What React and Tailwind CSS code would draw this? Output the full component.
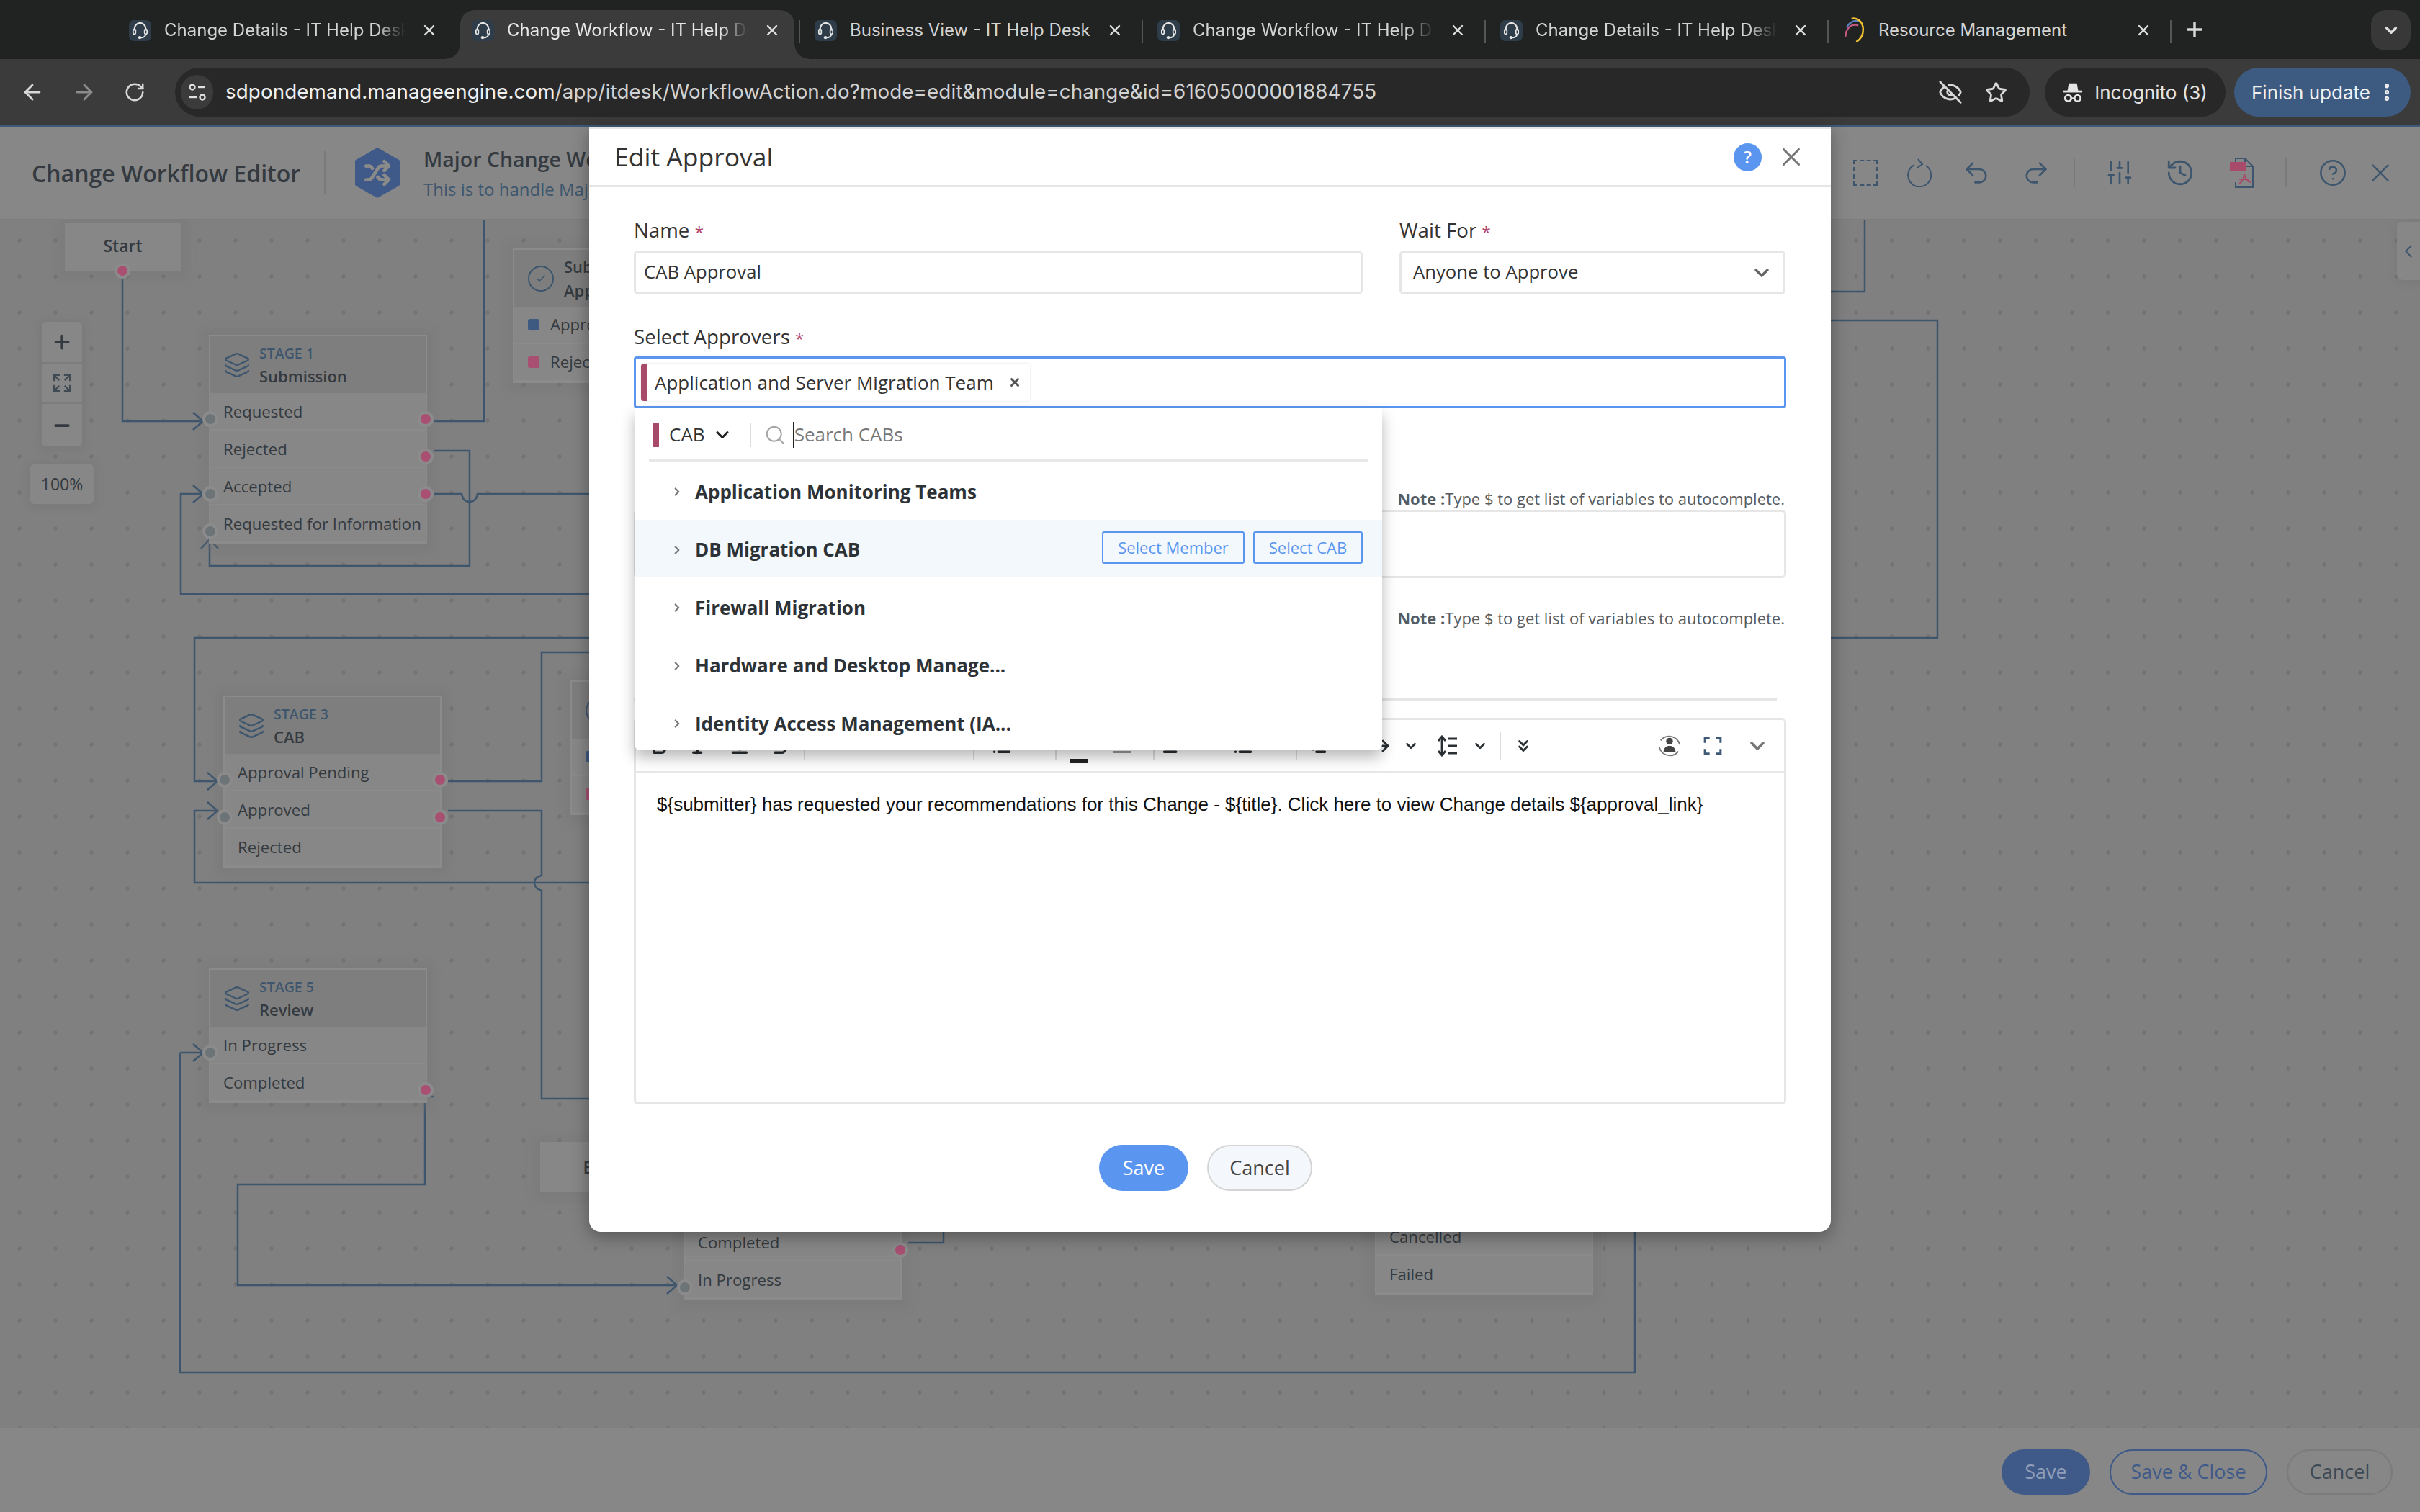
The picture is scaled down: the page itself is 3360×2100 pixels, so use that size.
import React from 'react';
import {
  ArrowLeft, ArrowRight, RotateCw, EyeOff, Star, Plus, X, ChevronDown, ChevronRight, ChevronLeft,
  ChevronsDown, MoreVertical, Search, Undo2, Redo2, SlidersVertical, History, CircleHelp, Layers,
  Check, Shuffle, Minus, Bold, Italic, Underline, Strikethrough, AlignLeft, List, Outdent,
} from 'lucide-react';

const tabs = [
  { title: 'Change Details - IT Help Desk', fade: true },
  { title: 'Change Workflow - IT Help Desk', fade: true, active: true },
  { title: 'Business View - IT Help Desk', sep: true },
  { title: 'Change Workflow - IT Help Desk', fade: true, sep: true },
  { title: 'Change Details - IT Help Desk', fade: true, sep: true },
  { title: 'Resource Management', sep: true, rainbow: true },
];

const HeadsetIcon = () => (
  <svg viewBox="0 0 32 30" className="w-[31px] h-[29px] shrink-0">
    <rect width="32" height="30" rx="7" fill="#2f3d4a" />
    <path d="M8 15v-3a8 8 0 0 1 16 0v3" fill="none" stroke="#e6e6e6" strokeWidth="2.2" />
    <rect x="6" y="13" width="3.6" height="7" rx="1.8" fill="none" stroke="#e6e6e6" strokeWidth="1.8" />
    <rect x="22.4" y="13" width="3.6" height="7" rx="1.8" fill="none" stroke="#e6e6e6" strokeWidth="1.8" />
    <path d="M24 20c0 3-3 5-7 5" fill="none" stroke="#e6e6e6" strokeWidth="2" />
    <circle cx="15.5" cy="25" r="2.2" fill="#e6e6e6" />
  </svg>
);

const RainbowIcon = () => (
  <svg viewBox="0 0 32 40" className="w-[31px] h-[38px] shrink-0" fill="none" strokeWidth="2.6">
    <path d="M3 30C4 16 12 10 22 13" stroke="#c2577f" />
    <path d="M5 16C9 8 17 4 25 8" stroke="#5b7fb8" />
    <path d="M12 3c8-2 17 4 17 16 0 9-5 15-10 18" stroke="#f2c230" />
  </svg>
);

const Tab = ({ tab }) => (
  <div className={`relative flex items-center h-[68px] w-[464px] mr-[12px] pl-[16px] pb-[12px] rounded-t-[20px] ${tab.active ? 'bg-[#3b3b3b]' : ''}`}>
    {tab.active && (
      <>
        <span className="absolute -left-[20px] bottom-0 w-[20px] h-[20px] bg-[radial-gradient(circle_at_0_0,transparent_19px,#3b3b3b_20px)]" />
        <span className="absolute -right-[20px] bottom-0 w-[20px] h-[20px] bg-[radial-gradient(circle_at_100%_0,transparent_19px,#3b3b3b_20px)]" />
      </>
    )}
    {tab.rainbow ? <RainbowIcon /> : <HeadsetIcon />}
    <span className={`ml-[18px] w-[335px] whitespace-nowrap overflow-hidden text-[24px] ${tab.active ? 'text-[#e8e8e8]' : 'text-[#d4d4d4]'} ${tab.fade ? '[mask-image:linear-gradient(to_right,black_88%,transparent)]' : ''}`}>
      {tab.title}
    </span>
    <X className="ml-[21px] w-[24px] h-[24px] text-[#dddddd]" strokeWidth={2.4} />
    {tab.sep && <span className="absolute -left-[6px] top-[14px] w-[2px] h-[32px] bg-[#555555]" />}
  </div>
);

const IncognitoIcon = () => (
  <svg viewBox="0 0 30 32" className="w-[28px] h-[30px]" fill="none" stroke="#e5e5e5">
    <path d="M7 14l2-11h12l2 11z" fill="#e5e5e5" stroke="none" />
    <path d="M1 15h28" strokeWidth="3" />
    <circle cx="8" cy="25" r="4.5" strokeWidth="3" />
    <circle cx="22" cy="25" r="4.5" strokeWidth="3" />
    <path d="M12.5 25h5" strokeWidth="2.4" />
  </svg>
);

const BrowserChrome = () => (
  <div className="font-['Inter',sans-serif]">
    <div className="relative flex items-end h-[82px] pl-[163px] bg-[#202322]">
      {tabs.map((tab, i) => <Tab key={i} tab={tab} />)}
      <span className="absolute left-[3013px] top-[28px] w-[2px] h-[32px] bg-[#555555]" />
      <Plus className="absolute left-[3031px] top-[25px] w-[32px] h-[32px] text-[#d8d8d8]" strokeWidth={2.6} />
      <div className="absolute left-[3292px] top-[14px] w-[55px] h-[56px] rounded-[20px] bg-[#383838] flex items-center justify-center">
        <ChevronDown className="w-[26px] h-[26px] text-[#e0e0e0]" strokeWidth={3} />
      </div>
    </div>
    <div className="flex items-center h-[94px] bg-[#3b3b3b] border-b-2 border-[#3e5a78]">
      <ArrowLeft className="ml-[28px] w-[34px] h-[34px] text-[#d8d8d8]" strokeWidth={2} />
      <ArrowRight className="ml-[38px] w-[34px] h-[34px] text-[#8c8c8c]" strokeWidth={2} />
      <RotateCw className="ml-[38px] w-[30px] h-[30px] text-[#d8d8d8]" strokeWidth={2} />
      <div className="ml-[41px] flex items-center w-[2575px] h-[68px] rounded-full bg-[#282828]">
        <div className="ml-[8px] w-[45px] h-[48px] rounded-full bg-[#3b3b3b] flex items-center justify-center">
          <svg viewBox="0 0 26 28" className="w-[26px] h-[28px]" fill="none" stroke="#e0e0e0" strokeWidth="2.4">
            <circle cx="6" cy="7" r="3.5" />
            <path d="M14 7h10" />
            <path d="M2 21h10" />
            <circle cx="20" cy="21" r="3.5" />
          </svg>
        </div>
        <span className="ml-[17px] text-[27.75px] tracking-[0.1px] text-[#d2d2d2] whitespace-nowrap">
          <span className="text-[#f0f0f0]">sdpondemand.manageengine.com</span>/app/itdesk/WorkflowAction.do?mode=edit&amp;module=change&amp;id=61605000001884755
        </span>
        <EyeOff className="ml-auto w-[34px] h-[34px] text-[#d8d8d8]" strokeWidth={2} />
        <Star className="ml-[31px] mr-[31px] w-[31px] h-[31px] text-[#d8d8d8]" strokeWidth={2.2} />
      </div>
      <div className="ml-[21px] flex items-center justify-center gap-[16px] w-[251px] h-[68px] rounded-full bg-[#282828] text-[26px] text-[#e4e4e4]">
        <IncognitoIcon />
        <span>Incognito (3)</span>
      </div>
      <div className="ml-[12px] flex items-center pl-[24px] w-[245px] h-[68px] rounded-full bg-[#3d5a80] text-[26px] text-[#f0f0f0]">
        <span>Finish update</span>
        <MoreVertical className="ml-[8px] w-[30px] h-[30px]" strokeWidth={3} />
      </div>
    </div>
  </div>
);

const Hexagon = () => (
  <svg viewBox="0 0 64 72" className="w-[64px] h-[72px] shrink-0">
    <path d="M32 1 62 18a3 3 0 0 1 1 3v30a3 3 0 0 1-1 3L32 71 2 54a3 3 0 0 1-1-3V21a3 3 0 0 1 1-3z" fill="#3f5a88" />
    <Shuffle x="13" y="17" width="38" height="38" color="#8a8a8a" strokeWidth={3} />
  </svg>
);

const RotateIcon = () => (
  <svg viewBox="0 0 36 40" className="w-[36px] h-[40px]" fill="none" stroke="#3d566e" strokeWidth="2">
    <path d="M10 9a16 16 0 1 0 16 1" />
    <path d="M15 1l6 7-7 5" />
  </svg>
);

const PdfIcon = () => (
  <svg viewBox="0 0 36 42" className="w-[36px] h-[42px]" fill="none" stroke="#3d566e" strokeWidth="2">
    <path d="M9 12V1h13l11 11v29H9v-7" />
    <path d="M22 1v11h11" />
    <rect x="1" y="6" width="22" height="13" fill="#a84a6a" stroke="none" />
    <path d="M21 22c0 8-4 12-7 14M21 22c1 7 5 11 9 12M14 30h14" stroke="#a84a6a" />
  </svg>
);

const EditorHeader = () => (
  <div className="flex items-center h-[130px] bg-[#878787] border-b-2 border-[#7c7c7c] text-[#343a40]">
    <span className="ml-[44px] pt-[2px] text-[32px] font-semibold whitespace-nowrap">Change Workflow Editor</span>
    <span className="ml-[33px] w-[2px] h-[60px] bg-[#7a7a7a]" />
    <div className="ml-[40px]"><Hexagon /></div>
    <div className="ml-[32px] w-[230px] pt-[5px] overflow-hidden whitespace-nowrap">
      <p className="text-[28.5px] leading-[40px] font-semibold">Major Change Workflow</p>
      <p className="text-[24px] leading-[44px] text-[#3d566e]">This is to handle Major Changes</p>
    </div>
    <div className="ml-auto flex items-center text-[#3d566e]">
      <span className="w-[34px] h-[36px] border-2 border-dashed border-[#3d566e]" />
      <span className="ml-[41px]"><RotateIcon /></span>
      <Undo2 className="ml-[40px] w-[40px] h-[40px]" strokeWidth={1.6} />
      <Redo2 className="ml-[43px] w-[40px] h-[40px]" strokeWidth={1.6} />
      <span className="ml-[32px] w-[2px] h-[40px] bg-[#7a7a7a]" />
      <SlidersVertical className="ml-[42px] w-[40px] h-[42px]" strokeWidth={1.6} />
      <History className="ml-[43px] w-[42px] h-[42px]" strokeWidth={1.6} />
      <span className="ml-[47px]"><PdfIcon /></span>
      <span className="ml-[42px] w-[2px] h-[40px] bg-[#7a7a7a]" />
      <CircleHelp className="ml-[44px] w-[40px] h-[42px]" strokeWidth={1.5} />
      <X className="ml-[25px] mr-[34px] w-[42px] h-[42px]" strokeWidth={1.4} />
    </div>
  </div>
);

const Connectors = () => (
  <svg className="absolute inset-0 w-full h-full" viewBox="0 306 3360 1678" fill="none" stroke="#3d566e" strokeWidth="2.5">
    <path d="M170 376V585H282M268 573l14 12-14 12" />
    <path d="M602 585H672V306" />
    <path d="M602 626H652V786H291V750M279 762l12-13 12 13" />
    <path d="M602 686H641Q643 697 652 697Q661 697 663 686H820" />
    <path d="M820 825H251V686H282M268 674l14 12-14 12" />
    <path d="M820 886H270V1085H302M288 1073l14 12-14 12" />
    <path d="M622 1085H752V906H820" />
    <path d="M622 1126H752V1216Q742 1218 742 1226Q742 1234 752 1237V1526H820" />
    <path d="M820 1226H270V1126H302M288 1114l14 12-14 12" />
    <path d="M602 1523H590V1645H330V1785H940M926 1773l14 12-14 12" />
    <path d="M250 1462H282M268 1450l14 12-14 12M250 1462V1906H2270V1700" />
    <path d="M1261 1726H1310V1700" />
    <path d="M2540 405H2589V306" />
    <path d="M2540 445H2690V886H2540" />
  </svg>
);

const Port = ({ side, color }) => (
  <span className={`absolute top-[25px] w-[22px] h-[22px] rounded-full border-4 border-[#8b8b8b] ${side === 'left' ? '-left-[11px]' : '-right-[11px]'} ${color}`} />
);

const StageNode = ({ pos, stage, title, rows }) => (
  <div className={`absolute w-[303px] bg-[#878787] border-2 border-[#8b8b8b] shadow-[0_2px_12px_8px_rgba(112,112,112,0.3)] text-[#343a40] ${pos}`}>
    {stage && (
      <div className="flex items-center h-[79px] bg-[#7e7e7e]">
        <Layers className="ml-[18px] w-[38px] h-[38px] text-[#3d566e]" strokeWidth={1.5} />
        <div className="ml-[12px]">
          <p className="text-[19.5px] leading-[30px] font-semibold text-[#3d566e]">{stage}</p>
          <p className="text-[22px] leading-[32px] font-semibold">{title}</p>
        </div>
      </div>
    )}
    {rows.map(row => (
      <div key={row.label} className="relative flex items-center h-[52px] pl-[18px] pt-[1px] border-b-2 border-[#8b8b8b] text-[22.2px] whitespace-nowrap">
        {row.left && <Port side="left" color="bg-[#6d7478]" />}
        <span>{row.label}</span>
        {row.right && <Port side="right" color="bg-[#a94f72]" />}
      </div>
    ))}
  </div>
);

const ApprovalNode = ({ pos, title }) => (
  <div className={`absolute w-[303px] bg-[#878787] border-2 border-[#8b8b8b] shadow-[0_2px_12px_8px_rgba(112,112,112,0.3)] text-[#343a40] ${pos}`}>
    <div className="flex items-center h-[79px] bg-[#7e7e7e]">
      <span className="ml-[19px] w-[36px] h-[36px] rounded-full border-2 border-[#3d566e] flex items-center justify-center">
        <Check className="w-[16px] h-[16px] text-[#3d566e]" />
      </span>
      <p className="ml-[14px] text-[22px] leading-[33px] font-semibold w-[170px]">Submission {title}</p>
    </div>
    <div className="flex items-center h-[52px] pl-[19px] border-b-2 border-[#8b8b8b] text-[22.2px]">
      <span className="w-[16px] h-[16px] rounded-[3px] bg-[#3e5a80]" />
      <span className="ml-[15px]">Approve</span>
    </div>
    <div className="flex items-center h-[52px] pl-[19px] border-b-2 border-[#8b8b8b] text-[22.2px]">
      <span className="w-[16px] h-[16px] rounded-[3px] bg-[#a94f72]" />
      <span className="ml-[15px]">Reject</span>
    </div>
  </div>
);

const Canvas = () => (
  <div className="relative flex-1 overflow-hidden bg-[#808080] bg-[radial-gradient(circle,#737373_2.5px,transparent_3px)] bg-[length:50px_50px] bg-[position:2px_3px]">
    <Connectors />

    <div className="absolute left-[90px] top-[4px] w-[161px] h-[66px] pb-[3px] flex items-center justify-center bg-[#878787] shadow-[0_2px_12px_8px_rgba(112,112,112,0.3)] text-[23px] font-semibold text-[#343a40]">
      Start
      <span className="absolute left-[69px] top-[55px] w-[22px] h-[22px] rounded-full border-4 border-[#8b8b8b] bg-[#a94f72]" />
    </div>

    <StageNode
      pos="left-[290px] top-[159px]"
      stage="STAGE 1"
      title="Submission"
      rows={[
        { label: 'Requested', left: true, right: true },
        { label: 'Rejected', right: true },
        { label: 'Accepted', left: true, right: true },
        { label: 'Requested for Information', left: true },
      ]}
    />
    <StageNode
      pos="left-[310px] top-[660px]"
      stage="STAGE 3"
      title="CAB"
      rows={[
        { label: 'Approval Pending', left: true, right: true },
        { label: 'Approved', left: true, right: true },
        { label: 'Rejected' },
      ]}
    />
    <StageNode
      pos="left-[290px] top-[1039px]"
      stage="STAGE 5"
      title="Review"
      rows={[
        { label: 'In Progress', left: true },
        { label: 'Completed', right: true },
      ]}
    />
    <StageNode
      pos="left-[949px] top-[1392px]"
      rows={[
        { label: 'Completed', right: true },
        { label: 'In Progress', left: true },
      ]}
    />
    <StageNode pos="left-[1909px] top-[1384px]" rows={[{ label: 'Cancelled' }, { label: 'Failed' }]} />
    <ApprovalNode pos="left-[712px] top-[39px]" title="Approval" />
    <ApprovalNode pos="left-[792px] top-[639px]" title="Approval" />

    <div className="absolute left-[750px] top-[1280px] w-[161px] h-[70px] flex items-center justify-center bg-[#878787] shadow-[0_2px_12px_8px_rgba(112,112,112,0.3)] text-[23px] font-semibold text-[#343a40]">
      End
    </div>

    <div className="absolute left-[58px] top-[141px] w-[56px] h-[173px] flex flex-col rounded-[6px] bg-[#878787] shadow-[0_2px_8px_5px_rgba(112,112,112,0.3)] text-[#343a40]">
      <div className="flex items-center justify-center h-[58px] border-b-2 border-[#7c7c7c]"><Plus className="w-[30px] h-[30px]" strokeWidth={2.6} /></div>
      <div className="flex items-center justify-center h-[56px] border-b-2 border-[#7c7c7c]">
        <svg viewBox="0 0 30 30" className="w-[28px] h-[28px]" fill="none" stroke="#404a52" strokeWidth="2.6">
          <path d="M3 12V3h9M3 3l8 8M18 3h9v9M27 3l-8 8M3 18v9h9M3 27l8-8M27 18v9h-9M27 27l-8-8" />
        </svg>
      </div>
      <div className="flex items-center justify-center flex-1"><Minus className="w-[30px] h-[30px]" strokeWidth={3} /></div>
    </div>
    <div className="absolute left-[42px] top-[338px] w-[88px] h-[56px] flex items-center justify-center rounded-[6px] bg-[#878787] shadow-[0_2px_8px_5px_rgba(112,112,112,0.3)] text-[23px] text-[#343a40]">
      100%
    </div>

    <div className="absolute left-[3328px] top-[2px] w-[32px] h-[81px] flex items-center justify-center rounded-l-[8px] bg-[#878787] shadow-[0_2px_8px_4px_rgba(112,112,112,0.3)]">
      <ChevronLeft className="w-[30px] h-[30px] text-[#3d566e]" strokeWidth={1.6} />
    </div>
  </div>
);

const FooterBar = () => (
  <div className="flex items-center justify-end gap-[27px] h-[116px] pr-[38px] pt-[5px] bg-[#878787] text-[27px]">
    <button className="w-[123px] h-[63px] rounded-full bg-[#3f5a88] text-[#8f9db8]">Save</button>
    <button className="w-[219px] h-[63px] rounded-full border-2 border-[#3f5a88] text-[#3f5a88]">Save &amp; Close</button>
    <button className="w-[147px] h-[63px] rounded-full border-2 border-[#7b7b7b] text-[#3d4a55]">Cancel</button>
  </div>
);

const Label = ({ children }) => (
  <p className="h-[36px] leading-[36px] mb-[11px] text-[27.7px] text-[#333333]">
    {children} <span className="text-[#b3446c] text-[22px]">*</span>
  </p>
);

const Note = () => (
  <p className="h-[30px] leading-[30px] pr-[2px] text-right text-[22px] text-[#555b60]">
    <span className="font-bold">Note :</span>Type $ to get list of variables to autocomplete.
  </p>
);

const cabs = ['Application Monitoring Teams', 'DB Migration CAB', 'Firewall Migration', 'Hardware and Desktop Manage...', 'Identity Access Management (IA...'];

const CabDropdown = () => (
  <div className="absolute left-[1px] top-[72px] w-[1038px] h-[475px] z-10 bg-white rounded-b-[8px] shadow-[0_10px_20px_rgba(0,0,0,0.28)]">
    <div className="flex items-center h-[74px] pt-[2px] mx-[20px] border-b-[3px] border-[#e8e8e8] text-[#333333]">
      <span className="ml-[5px] w-[9px] h-[34px] bg-[#a84a6a]" />
      <span className="ml-[14px] text-[26px]">CAB</span>
      <ChevronDown className="ml-[10px] w-[28px] h-[28px] text-[#222222]" strokeWidth={2.6} />
      <span className="ml-[24px] w-[2px] h-[34px] bg-[#dddddd]" />
      <Search className="ml-[18px] w-[30px] h-[30px] text-[#a5a5a5]" strokeWidth={1.6} />
      <span className="ml-[10px] w-[2px] h-[36px] bg-[#222222]" />
      <span className="text-[26px] text-[#777777]">Search CABs</span>
    </div>
    {cabs.map(cab => (
      <div key={cab} className={`flex items-center h-[80.5px] pl-[50px] ${cab === 'DB Migration CAB' ? 'bg-[#f3f8fd]' : ''}`}>
        <ChevronRight className="mt-[4px] w-[18px] h-[24px] text-[#777777]" strokeWidth={3} />
        <span className="mt-[4px] ml-[16px] text-[26px] font-bold text-[#2d3236] whitespace-nowrap">{cab}</span>
        {cab === 'DB Migration CAB' && (
          <div className="ml-auto mr-[27px] mb-[2px] flex gap-[12px] text-[22px] text-[#5a96ef]">
            <button className="w-[198px] h-[45px] rounded-[3px] border-2 border-[#5a96ef]">Select Member</button>
            <button className="w-[152px] h-[45px] rounded-[3px] border-2 border-[#5a96ef]">Select CAB</button>
          </div>
        )}
      </div>
    ))}
  </div>
);

const Divider = ({ ml }) => <span className={`w-[2px] h-[40px] bg-[#dddddd] ${ml}`} />;

const EditorToolbar = () => (
  <div className="flex items-center h-[74px] border-b-[3px] border-[#e8e8e8] text-[#2a2f33]">
    <Bold className="ml-[18px] w-[28px] h-[28px]" strokeWidth={3} />
    <Italic className="ml-[28px] w-[28px] h-[28px]" strokeWidth={3} />
    <Underline className="ml-[28px] w-[28px] h-[28px]" strokeWidth={3} />
    <Strikethrough className="ml-[28px] w-[28px] h-[28px]" strokeWidth={3} />
    <Divider ml="ml-[19px]" />
    <Divider ml="ml-[233px]" />
    <List className="ml-[24px] w-[28px] h-[28px]" strokeWidth={3} />
    <Divider ml="ml-[60px]" />
    <span className="ml-[18px] w-[26px] h-[6px] mt-[42px] bg-[#222222]" />
    <span className="ml-[34px] w-[26px] h-[3px] mt-[18px] bg-[#999999]" />
    <Divider ml="ml-[30px]" />
    <AlignLeft className="ml-[10px] w-[28px] h-[28px]" strokeWidth={3} />
    <List className="ml-[71px] w-[28px] h-[28px]" strokeWidth={3} />
    <Divider ml="ml-[59px]" />
    <Outdent className="ml-[14px] w-[28px] h-[28px]" strokeWidth={3} />
    <ArrowRight className="ml-[65px] w-[24px] h-[24px]" strokeWidth={3} />
    <ChevronDown className="ml-[16px] w-[22px] h-[22px]" strokeWidth={3} />
    <svg viewBox="0 0 30 30" className="ml-[25px] w-[30px] h-[30px]" fill="none" stroke="#2a2f33" strokeWidth="2.8">
      <path d="M7 3v24M2 8l5-6 5 6M2 22l5 6 5-6M16 5h12M16 15h12M16 25h12" />
    </svg>
    <ChevronDown className="ml-[19px] w-[22px] h-[22px]" strokeWidth={3} />
    <Divider ml="ml-[16px]" />
    <ChevronsDown className="ml-[18px] w-[26px] h-[26px]" strokeWidth={2.6} />
    <svg viewBox="0 0 36 40" className="ml-[173px] w-[34px] h-[38px]" fill="none" stroke="#777777" strokeWidth="2">
      <path d="M5 12a16 16 0 0 1 28 6M31 28a16 16 0 0 1-28-6" />
      <circle cx="18" cy="13" r="5" fill="#444444" stroke="none" />
      <path d="M9 29c1-7 4-9 9-9s8 2 9 9z" fill="#444444" stroke="none" />
    </svg>
    <svg viewBox="0 0 24 24" className="ml-[30px] w-[26px] h-[28px]" fill="none" stroke="#3e5a76" strokeWidth="2.8">
      <path d="M2 8V2h6M16 2h6v6M22 16v6h-6M8 22H2v-6" />
    </svg>
    <ChevronDown className="ml-[33px] w-[32px] h-[32px] text-[#777777]" strokeWidth={2.8} />
  </div>
);

const EditApprovalModal = () => (
  <div className="absolute left-[818px] top-[176px] w-[1724px] h-[1535px] z-20 bg-white rounded-b-[16px] border-t-[3px] border-[#e6e6e6] shadow-[0_6px_24px_rgba(0,0,0,0.35)] text-[#333333]">
    <div className="flex items-center h-[81px] pl-[35px] border-b-[3px] border-[#e6e6e6]">
      <span className="text-[35.5px]">Edit Approval</span>
      <span className="ml-auto w-[39px] h-[39px] rounded-full bg-[#5a96ef] text-white text-[24px] font-semibold flex items-center justify-center">?</span>
      <X className="ml-[20px] mr-[34px] w-[42px] h-[42px] text-[#777777]" strokeWidth={1.8} />
    </div>

    <div className="px-[62px] pt-[41px]">
      <div className="flex gap-[51px]">
        <div className="w-[1012px]">
          <Label>Name</Label>
          <div className="flex items-center h-[61px] pl-[11px] rounded-[6px] border-[3px] border-[#e6e6e6] text-[25.7px]">CAB Approval</div>
        </div>
        <div className="w-[536px]">
          <Label>Wait For</Label>
          <div className="flex items-center justify-between h-[61px] pl-[16px] pr-[14px] rounded-[6px] border-[3px] border-[#e6e6e6] text-[25.7px]">
            <span>Anyone to Approve</span>
            <ChevronDown className="w-[32px] h-[32px] text-[#666666]" strokeWidth={2.6} />
          </div>
        </div>
      </div>

      <div className="relative mt-[40px]">
        <p className="h-[36px] leading-[36px] mb-[10px] text-[27.7px]">Select Approvers <span className="text-[#b3446c] text-[22px]">*</span></p>
        <div className="relative">
          <div className="flex items-center h-[72px] pl-[7px] rounded-[4px] border-[3px] border-[#5a96ef]">
            <div className="flex items-center h-[52px] w-[540px] rounded-[4px] border-l-[8px] border-[#a84a6a] pl-[11px] shadow-[0_0_3px_rgba(0,0,0,0.12)] text-[26px]">
              <span className="whitespace-nowrap">Application and Server Migration Team</span>
              <X className="ml-[20px] w-[18px] h-[18px] shrink-0 text-[#555555]" strokeWidth={4} />
            </div>
          </div>
          <CabDropdown />
        </div>
      </div>

      <div className="mt-[110px]"><Note /></div>
      <div className="h-[95px] mt-[1px] rounded-[6px] border-[3px] border-[#e6e6e6]" />
      <div className="mt-[40px]"><Note /></div>
      <div className="h-[3px] mt-[97px] mr-[13px] bg-[#e6e6e6]" />

      <div className="h-[537px] mt-[24px] rounded-[6px] border-[3px] border-[#e6e6e6]">
        <EditorToolbar />
        <p className="mt-[24px] ml-[29px] font-['Liberation_Sans',sans-serif] text-[26px] text-[#111111] whitespace-nowrap">
          {'${submitter} has requested your recommendations for this Change - ${title}. Click here to view Change details ${approval_link}'}
        </p>
      </div>

      <div className="flex justify-center gap-[26px] mt-[56px] pr-[12px] text-[27px]">
        <button className="w-[124px] h-[64px] rounded-full bg-[#5a96ef] text-white">Save</button>
        <button className="w-[146px] h-[64px] rounded-full bg-[#f4f8fc] border-2 border-[#d4d4d4] text-[#444444]">Cancel</button>
      </div>
    </div>
  </div>
);

const App = () => (
  <div className="relative flex flex-col w-[3360px] h-[2100px] overflow-hidden font-['Open_Sans',sans-serif]">
    <BrowserChrome />
    <EditorHeader />
    <Canvas />
    <FooterBar />
    <EditApprovalModal />
  </div>
);

export default App;
